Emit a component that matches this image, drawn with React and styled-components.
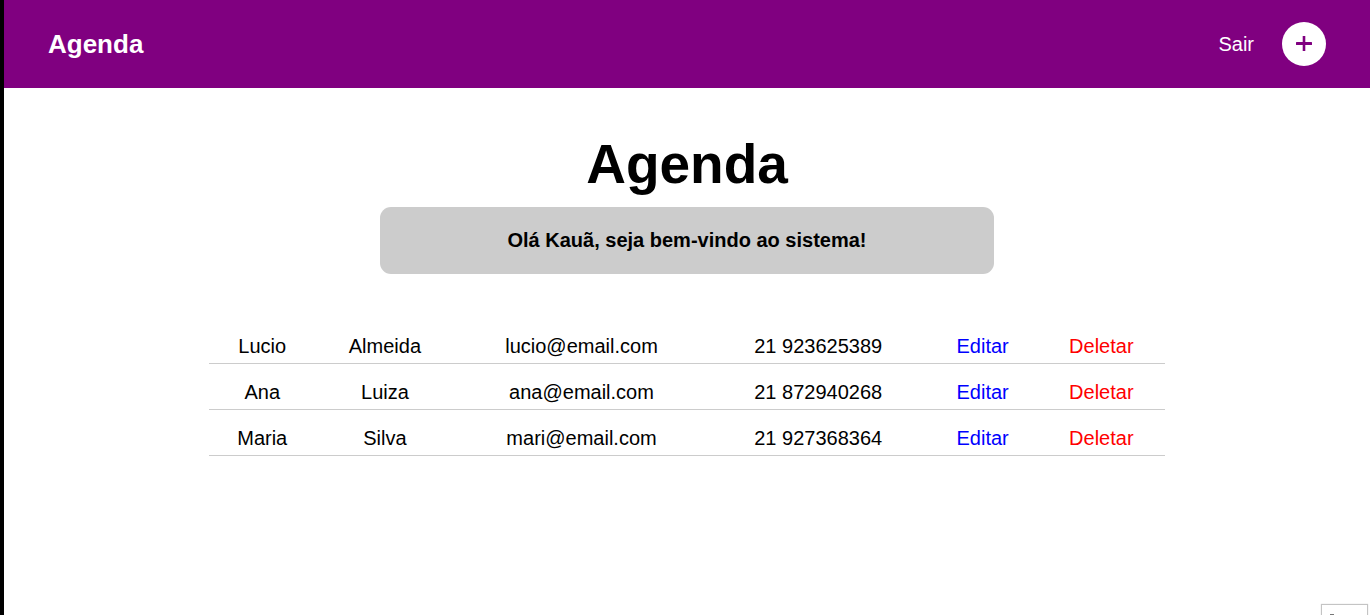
import React from "react";
import styled, { createGlobalStyle } from "styled-components";

const GlobalStyle = createGlobalStyle`
  * { box-sizing: border-box; }
  html { height: 100%; }
  body {
    margin: 0;
    min-height: 100%;
    border-left: 4px solid #000;
    background: #fff;
    color: #000;
    font-family: Arial, "Liberation Sans", sans-serif;
    font-size: 20px;
    line-height: 23px;
  }
  a { text-decoration: none; }
`;

const Header = styled.header`
  display: flex;
  align-items: center;
  justify-content: space-between;
  padding: 22px 44px;
  background: #800080;
`;

const Brand = styled.a`
  color: #fff;
  font-size: 26px;
  font-weight: bold;
  line-height: 30px;
`;

const Nav = styled.nav`
  display: flex;
  align-items: center;
  gap: 28px;
`;

const NavLink = styled.a`
  color: #fff;
`;

const AddLink = styled.a`
  display: flex;
  align-items: center;
  justify-content: center;
  width: 44px;
  height: 44px;
  border-radius: 50%;
  background: #fff;
  color: #800080;
`;

const Main = styled.main`
  display: flex;
  flex-direction: column;
  align-items: center;
  padding-top: 44px;
`;

const Title = styled.h1`
  margin: 0 0 11px;
  font-size: 55px;
  line-height: 64px;
`;

const Welcome = styled.p`
  width: 45%;
  margin: 0 0 44px;
  padding: 22px;
  border-radius: 11px;
  background: #ccc;
  font-weight: bold;
  text-align: center;
`;

const Table = styled.table`
  width: 70%;
  border-collapse: separate;
  border-spacing: 0;
`;

const Cell = styled.td`
  padding: 17px 12px 5px;
  border-bottom: 1px solid #ccc;
  text-align: center;
`;

const Action = styled.a`
  color: ${({ $danger }) => ($danger ? "#f00" : "#00f")};
`;

const CornerPanel = styled.aside`
  position: fixed;
  right: 2px;
  bottom: 0;
  width: 47px;
  height: 11px;
  padding: 9px 8px 0;
  border: 1px solid #c4c4c4;
  border-bottom: 0;
  background: #fff;
  box-shadow: 0 0 1px #ccc;
`;

const CornerMark = styled.div`
  width: 4px;
  height: 1px;
  background: #777;
`;

const contacts = [
  ["Lucio", "Almeida", "lucio@email.com", "21 923625389"],
  ["Ana", "Luiza", "ana@email.com", "21 872940268"],
  ["Maria", "Silva", "mari@email.com", "21 927368364"],
];

function PlusIcon() {
  return (
    <svg width="16" height="16" viewBox="0 0 16 16" fill="currentColor" aria-hidden="true">
      <rect x="0" y="6" width="16" height="3" rx="0.5" />
      <rect x="6.7" y="0" width="2.6" height="15" />
    </svg>
  );
}

export default function App() {
  return (
    <>
      <GlobalStyle />
      <Header>
        <Brand href="#">Agenda</Brand>
        <Nav>
          <NavLink href="#sair">Sair</NavLink>
          <AddLink href="#novo" aria-label="Adicionar contato">
            <PlusIcon />
          </AddLink>
        </Nav>
      </Header>
      <Main>
        <Title>Agenda</Title>
        <Welcome>Olá Kauã, seja bem-vindo ao sistema!</Welcome>
        <Table>
          <tbody>
            {contacts.map((fields) => (
              <tr key={fields[2]}>
                {fields.map((value) => (
                  <Cell key={value}>{value}</Cell>
                ))}
                <Cell>
                  <Action href="#editar">Editar</Action>
                </Cell>
                <Cell>
                  <Action href="#deletar" $danger>
                    Deletar
                  </Action>
                </Cell>
              </tr>
            ))}
          </tbody>
        </Table>
      </Main>
      <CornerPanel>
        <CornerMark />
      </CornerPanel>
    </>
  );
}
